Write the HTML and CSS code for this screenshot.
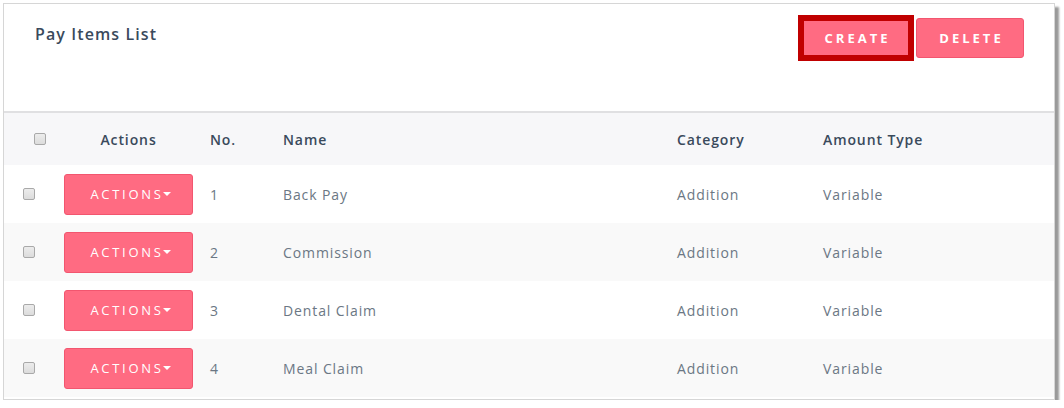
FILE: index.html
```html
<!DOCTYPE html>
<html>
<head>
<meta charset="utf-8">
<link rel="stylesheet" href="styles.css">
</head>
<body>
<div class="panel">
  <div class="panel-head">
    <h1 class="title">Pay Items List</h1>
    <div class="head-actions">
      <div class="highlight"><button class="btn btn-create">CREATE</button></div>
      <button class="btn btn-delete">DELETE</button>
    </div>
  </div>
  <div class="table">
    <div class="row head">
      <div class="c-cb"><span class="cb"></span></div>
      <div class="c-act center">Actions</div>
      <div class="c-no">No.</div>
      <div class="c-name">Name</div>
      <div class="c-cat">Category</div>
      <div class="c-amt">Amount Type</div>
    </div>
    <div class="row">
      <div class="c-cb"><span class="cb"></span></div>
      <div class="c-act"><button class="act-btn">ACTIONS<span class="caret"></span></button></div>
      <div class="c-no">1</div>
      <div class="c-name">Back Pay</div>
      <div class="c-cat">Addition</div>
      <div class="c-amt">Variable</div>
    </div>
    <div class="row alt">
      <div class="c-cb"><span class="cb"></span></div>
      <div class="c-act"><button class="act-btn">ACTIONS<span class="caret"></span></button></div>
      <div class="c-no">2</div>
      <div class="c-name">Commission</div>
      <div class="c-cat">Addition</div>
      <div class="c-amt">Variable</div>
    </div>
    <div class="row">
      <div class="c-cb"><span class="cb"></span></div>
      <div class="c-act"><button class="act-btn">ACTIONS<span class="caret"></span></button></div>
      <div class="c-no">3</div>
      <div class="c-name">Dental Claim</div>
      <div class="c-cat">Addition</div>
      <div class="c-amt">Variable</div>
    </div>
    <div class="row alt">
      <div class="c-cb"><span class="cb"></span></div>
      <div class="c-act"><button class="act-btn">ACTIONS<span class="caret"></span></button></div>
      <div class="c-no">4</div>
      <div class="c-name">Meal Claim</div>
      <div class="c-cat">Addition</div>
      <div class="c-amt">Variable</div>
    </div>
  </div>
</div>
</body>
</html>
```
FILE: styles.css
```css
* { box-sizing: border-box; }
html, body { margin: 0; padding: 0; background: #fff; }
body { font-family: "Open Sans", "Liberation Sans", sans-serif; }

.panel {
  margin: 3px 0 0 3px;
  width: 1052px;
  height: 397px;
  border: 1px solid #d6d6d6;
  background: #fff;
  box-shadow: 4px 4px 2px #9a9a9a;
  overflow: hidden;
}

.panel-head {
  height: 109px;
  border-bottom: 2px solid #e0e0e2;
  display: flex;
  justify-content: space-between;
  align-items: flex-start;
  padding: 11px 30px 0 31px;
}

.title {
  margin: 8px 0 0 0;
  font-size: 16px;
  font-weight: 600;
  letter-spacing: 1.1px;
  color: #3a4a5c;
}

.head-actions { display: flex; align-items: center; gap: 2px; }

.highlight {
  border: 6px solid #c00000;
}

.btn {
  font-family: "Open Sans", "Liberation Sans", sans-serif;
  font-size: 13px;
  font-weight: 700;
  letter-spacing: 3px;
  color: #fff;
  background: #ff6b82;
  border: none;
  cursor: pointer;
}
.btn-create { width: 104px; height: 34px; display: block; padding: 0 0 0 3px; }
.btn-delete { width: 108px; height: 40px; border: 1px solid #f2566f; border-radius: 3px; padding: 0 0 0 3px; }

.row {
  display: grid;
  grid-template-columns: 60px 146px 73px 394px 146px 1fr;
  height: 58px;
  align-items: center;
  font-size: 14px;
  color: #6b7784;
  letter-spacing: 0.9px;
}
.row.head {
  height: 52px;
  background: #f7f7f9;
  color: #3a4a5c;
  font-weight: 600;
}
.row.alt { background: #f9f9f9; }

.c-cb { padding-left: 19px; display: flex; }
.row.head .c-cb { padding-left: 30px; }
.c-act.center { width: 129px; text-align: center; }

.cb {
  width: 12px;
  height: 12px;
  border: 1px solid #a9a9a9;
  border-radius: 2px;
  background: linear-gradient(#ececec, #dcdcdc);
  display: block;
}

.act-btn {
  width: 129px;
  height: 41px;
  background: #ff6b82;
  border: 1px solid #f2566f;
  border-radius: 3px;
  color: #fff;
  font-family: "Open Sans", "Liberation Sans", sans-serif;
  font-size: 13px;
  font-weight: 400;
  letter-spacing: 2.7px;
  display: flex;
  align-items: center;
  justify-content: center;
  padding: 0 0 0 4px;
  cursor: pointer;
}
.caret {
  display: inline-block;
  width: 0; height: 0;
  border-left: 4px solid transparent;
  border-right: 4px solid transparent;
  border-top: 4px solid #fff;
  margin-left: -1px;
}
```
